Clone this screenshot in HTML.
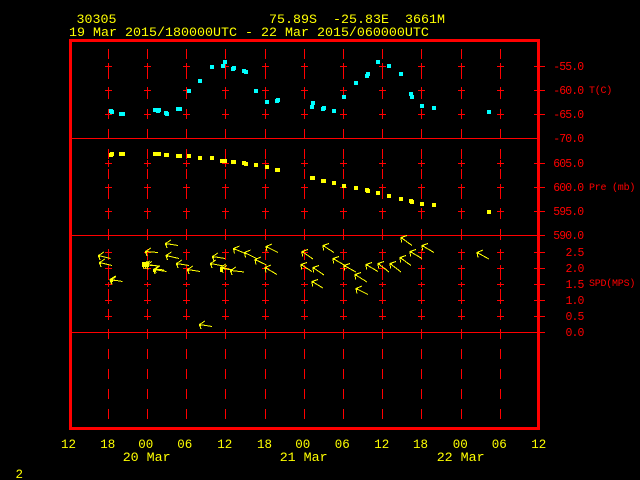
<!DOCTYPE html>
<html>
<head>
<meta charset="utf-8">
<title>30305</title>
<style>
html,body{margin:0;padding:0;background:#000;width:640px;height:480px;overflow:hidden}
svg{display:block}
text{font-family:"Liberation Mono",monospace;white-space:pre}
.y{fill:#ff0;font-size:13.33px}
.b{fill:#ff0;font-size:12.5px}
.r{fill:#f00;font-size:11.5px;letter-spacing:-.9px}
.u{fill:#f00;font-size:10px;letter-spacing:-.24px}
</style>
</head>
<body>
<svg width="640" height="480" viewBox="0 0 640 480" xmlns="http://www.w3.org/2000/svg">
<rect width="640" height="480" fill="#000"/>
<defs>
<g id="c" fill="none" stroke="#f00" stroke-width="1" shape-rendering="crispEdges">
<path d="M.5 49V59M.5 63V79M.5 87V99M.5 109V119M.5 129V138M.5 149V159M.5 160V167M.5 169V179M.5 184V199M.5 208V219M.5 229V240M.5 249V260M.5 265V280M.5 282V287M.5 289V304M.5 309V320M.5 329V339M.5 349V359M.5 369V379M.5 389V399M.5 409V419"/>
<path d="M-3 66.5H4M-3 90.5H4M-3 114.5H4M-3 163.5H4M-3 187.5H4M-3 211.5H4M-3 252.5H4M-3 268.5H4M-3 284.5H4M-3 300.5H4M-3 316.5H4"/>
</g>
</defs>
<use href="#c" x="108"/><use href="#c" x="147"/><use href="#c" x="186"/><use href="#c" x="225"/><use href="#c" x="265"/><use href="#c" x="304"/><use href="#c" x="343"/><use href="#c" x="382"/><use href="#c" x="421"/><use href="#c" x="461"/><use href="#c" x="500"/>
<g fill="none" stroke="#f00" stroke-width="1" shape-rendering="crispEdges">
<path d="M72 138.5H537M72 235.5H537M72 332.5H537"/>
<path d="M534 66.5H545M534 90.5H545M534 114.5H545M534 163.5H545M534 187.5H545M534 211.5H545M534 235.5H545M534 252.5H545M534 268.5H545M534 284.5H545M534 300.5H545M534 316.5H545M534 332.5H545"/>
</g>
<rect x="70.5" y="40.5" width="468" height="388" fill="none" stroke="#f00" stroke-width="3" shape-rendering="crispEdges"/>

<g fill="#0ff" shape-rendering="crispEdges">
<path d="M109 109h4v4h-4zM110 110h4v4h-4zM119 112h4v4h-4zM121 112h4v4h-4zM153 108h4v4h-4zM155 108h4v4h-4zM157 108h4v4h-4zM156 109h4v4h-4zM164 111h4v4h-4zM165 112h4v4h-4zM176 107h4v4h-4zM178 107h4v4h-4zM187 89h4v4h-4zM198 79h4v4h-4zM210 65h4v4h-4zM221 64h4v4h-4zM223 60h4v4h-4zM231 67h4v4h-4zM232 66h4v4h-4zM242 69h4v4h-4zM244 70h4v4h-4zM254 89h4v4h-4zM265 100h4v4h-4zM275 99h4v4h-4zM276 98h4v4h-4zM310 105h4v4h-4zM311 101h4v4h-4zM321 107h4v4h-4zM322 106h4v4h-4zM332 109h4v4h-4zM342 95h4v4h-4zM354 81h4v4h-4zM365 74h4v4h-4zM366 72h4v4h-4zM376 60h4v4h-4zM387 64h4v4h-4zM399 72h4v4h-4zM409 92h4v4h-4zM410 95h4v4h-4zM420 104h4v4h-4zM432 106h4v4h-4zM487 110h4v4h-4z"/>
</g>
<g fill="#ff0" shape-rendering="crispEdges">
<path d="M109 153h4v4h-4zM110 152h4v4h-4zM119 152h4v4h-4zM121 152h4v4h-4zM153 152h4v4h-4zM155 152h4v4h-4zM157 152h4v4h-4zM164 153h4v4h-4zM165 153h4v4h-4zM176 154h4v4h-4zM178 154h4v4h-4zM187 154h4v4h-4zM198 156h4v4h-4zM210 156h4v4h-4zM220 159h4v4h-4zM222 159h4v4h-4zM223 159h4v4h-4zM231 160h4v4h-4zM232 160h4v4h-4zM242 161h4v4h-4zM244 162h4v4h-4zM254 163h4v4h-4zM265 165h4v4h-4zM275 168h4v4h-4zM276 168h4v4h-4zM310 176h4v4h-4zM311 176h4v4h-4zM321 179h4v4h-4zM322 179h4v4h-4zM332 181h4v4h-4zM342 184h4v4h-4zM354 186h4v4h-4zM365 188h4v4h-4zM366 189h4v4h-4zM376 191h4v4h-4zM387 194h4v4h-4zM399 197h4v4h-4zM409 199h4v4h-4zM410 200h4v4h-4zM420 202h4v4h-4zM432 203h4v4h-4zM487 210h4v4h-4z"/>
</g>

<g fill="none" stroke="#ff0" stroke-width="1" shape-rendering="crispEdges">
<path d="M110.5 258.5L98.5 255.5m5.5-3.5l-5.5 3.5l1.5 4.5"/>
<path d="M112 265.5L99.5 262.5m5.5-3.5l-5.5 3.5l1.5 4.5"/>
<path d="M122.5 281.5L110 279.5m5.5-3.5l-5.5 3.5l1.5 4.5"/>
<path d="M120 281L111 280m5-3.5l-5 3.5l1 4.5"/>
<path d="M158 252.5L145.5 251.5m5.5-3.5l-5.5 3.5l1.5 4.5"/>
<path d="M178 245.5L165.5 243.5m5.5-3.5l-5.5 3.5l1.5 4.5"/>
<path d="M179 258.5L166 255.5m5.5-3.5l-5.5 3.5l1.5 4.5"/>
<path d="M155.5 265.5L142.5 264.5m5.5-3.5l-5.5 3.5l1.5 4.5"/>
<path d="M157.5 266L144.5 264.5m5.5-3.5l-5.5 3.5l1.5 4.5"/>
<path d="M160 266L146.5 265m5.5-3.5l-5.5 3.5l1.5 4.5"/>
<path d="M166.5 271.5L153.5 269.5m5.5-3.5l-5.5 3.5l1.5 4.5"/>
<path d="M164 270L155 269m5-3l-5 3l1 4"/>
<path d="M189 265.5L176.5 263.5m5.5-3.5l-5.5 3.5l1.5 4.5"/>
<path d="M200 271.5L187.5 269.5m5.5-3.5l-5.5 3.5l1.5 4.5"/>
<path d="M212 326.5L199.5 324.5m5.5-3.5l-5.5 3.5l1.5 4.5"/>
<path d="M225 258.5L212.5 256.5m5.5-3.5l-5.5 3.5l1.5 4.5"/>
<path d="M223.5 266L210.5 263.5m5.5-3.5l-5.5 3.5l1.5 4.5"/>
<path d="M233 270L220.5 267.5m5.5-3.5l-5.5 3.5l1.5 4.5"/>
<path d="M233 270L222 268.5m5-3l-5 3l1 4.5"/>
<path d="M244 272L230.5 270.5m5.5-3.5l-5.5 3.5l1.5 4.5"/>
<path d="M246.5 254L233.5 248.5m6-2.5l-6 2.5l1 5"/>
<path d="M256.5 258.5L244.5 252.5m6-2.5l-6 2.5l1 5"/>
<path d="M266.5 265L255 259.5m6-2.5l-6 2.5l1 5"/>
<path d="M278 252.5L266 246.5m6-2.5l-6 2.5l1 5"/>
<path d="M277 274.5L265 267.5m6-2.5l-6 2.5l1 5"/>
<path d="M313 259L302 251.5m6-2l-6 2l.5 5"/>
<path d="M312 271.5L301 264.5m6-2l-6 2l.5 5"/>
<path d="M324 275L313 267.5m6-2l-6 2l.5 5"/>
<path d="M323 288L312 281.5m6-2l-6 2l.5 5"/>
<path d="M334 252.5L323 245.5m6-2l-6 2l.5 5"/>
<path d="M345 265.5L333 258.5m6-2l-6 2l.5 5"/>
<path d="M356 272L344 265.5m6-2l-6 2l.5 5"/>
<path d="M367 282L355 274.5m6-2l-6 2l.5 5"/>
<path d="M368 294.5L356 288.5m6-2.5l-6 2.5l1 5"/>
<path d="M378 271.5L366 264.5m6-2l-6 2l.5 5"/>
<path d="M389 272L378 263.5m6-2l-6 2l.5 5"/>
<path d="M401 272L390 263.5m6-2l-6 2l.5 5"/>
<path d="M411 265.5L400 257.5m6-2l-6 2l.5 5"/>
<path d="M412 245.5L401 237.5m6-2l-6 2l.5 5"/>
<path d="M422 258.5L410 251.5m6-2l-6 2l.5 5"/>
<path d="M434 252.5L422 245.5m6-2l-6 2l.5 5"/>
<path d="M489 259L477 252.5m6-2.5l-6 2.5l1 5"/>
</g>
<g fill="#ff0" shape-rendering="crispEdges">
<path d="M98 255h2v2h-2zM99 262h2v2h-2zM110 279h3v3h-3zM145 251h2v2h-2zM165 243h2v2h-2zM166 255h2v2h-2zM142 262h7v5h-7zM153 269h3v3h-3zM176 263h2v2h-2zM187 269h2v2h-2zM199 324h2v2h-2zM212 256h2v2h-2zM210 263h2v2h-2zM220 267h3v5h-3zM230 270h2v2h-2zM233 248h2v2h-2zM244 252h2v2h-2zM255 259h2v2h-2zM266 246h2v2h-2zM265 267h2v2h-2zM302 251h2v2h-2zM301 264h2v2h-2zM313 267h2v2h-2zM312 281h2v2h-2zM323 245h2v2h-2zM333 258h2v2h-2zM344 265h2v2h-2zM355 274h2v2h-2zM356 288h2v2h-2zM366 264h2v2h-2zM378 263h2v2h-2zM390 263h2v2h-2zM400 257h2v2h-2zM401 237h2v2h-2zM410 251h2v2h-2zM422 245h2v2h-2zM477 252h2v2h-2z"/>
</g>

<text class="y" x="76.5" y="23">30305</text>
<text class="y" x="269" y="23">75.89S  -25.83E  3661M</text>
<text class="y" x="69" y="36">19 Mar 2015/180000UTC - 22 Mar 2015/060000UTC</text>

<text class="r" x="553.3" y="70">-55.0</text>
<text class="r" x="553.3" y="94">-60.0</text>
<text class="r" x="553.3" y="118">-65.0</text>
<text class="r" x="553.3" y="142">-70.0</text>
<text class="r" x="553.3" y="167">605.0</text>
<text class="r" x="553.3" y="191">600.0</text>
<text class="r" x="553.3" y="215">595.0</text>
<text class="r" x="553.3" y="239">590.0</text>
<text class="r" x="565.5" y="256">2.5</text>
<text class="r" x="565.5" y="272">2.0</text>
<text class="r" x="565.5" y="288">1.5</text>
<text class="r" x="565.5" y="304">1.0</text>
<text class="r" x="565.5" y="320">0.5</text>
<text class="r" x="565.5" y="336">0.0</text>

<text class="u" x="589" y="93">T(C)</text>
<text class="u" x="589" y="190">Pre (mb)</text>
<text class="u" x="589" y="286">SPD(MPS)</text>

<text class="b" x="61" y="448">12</text>
<text class="b" x="100.3" y="448">18</text>
<text class="b" x="138.3" y="448">00</text>
<text class="b" x="177.3" y="448">06</text>
<text class="b" x="217.3" y="448">12</text>
<text class="b" x="257" y="448">18</text>
<text class="b" x="295.3" y="448">00</text>
<text class="b" x="334.7" y="448">06</text>
<text class="b" x="374.3" y="448">12</text>
<text class="b" x="413" y="448">18</text>
<text class="b" x="452.7" y="448">00</text>
<text class="b" x="491.7" y="448">06</text>
<text class="b" x="531.3" y="448">12</text>

<text class="y" x="122.7" y="461">20 Mar</text>
<text class="y" x="279.7" y="461">21 Mar</text>
<text class="y" x="436.7" y="461">22 Mar</text>
<text class="b" x="15.5" y="478">2</text>
</svg>
</body>
</html>
